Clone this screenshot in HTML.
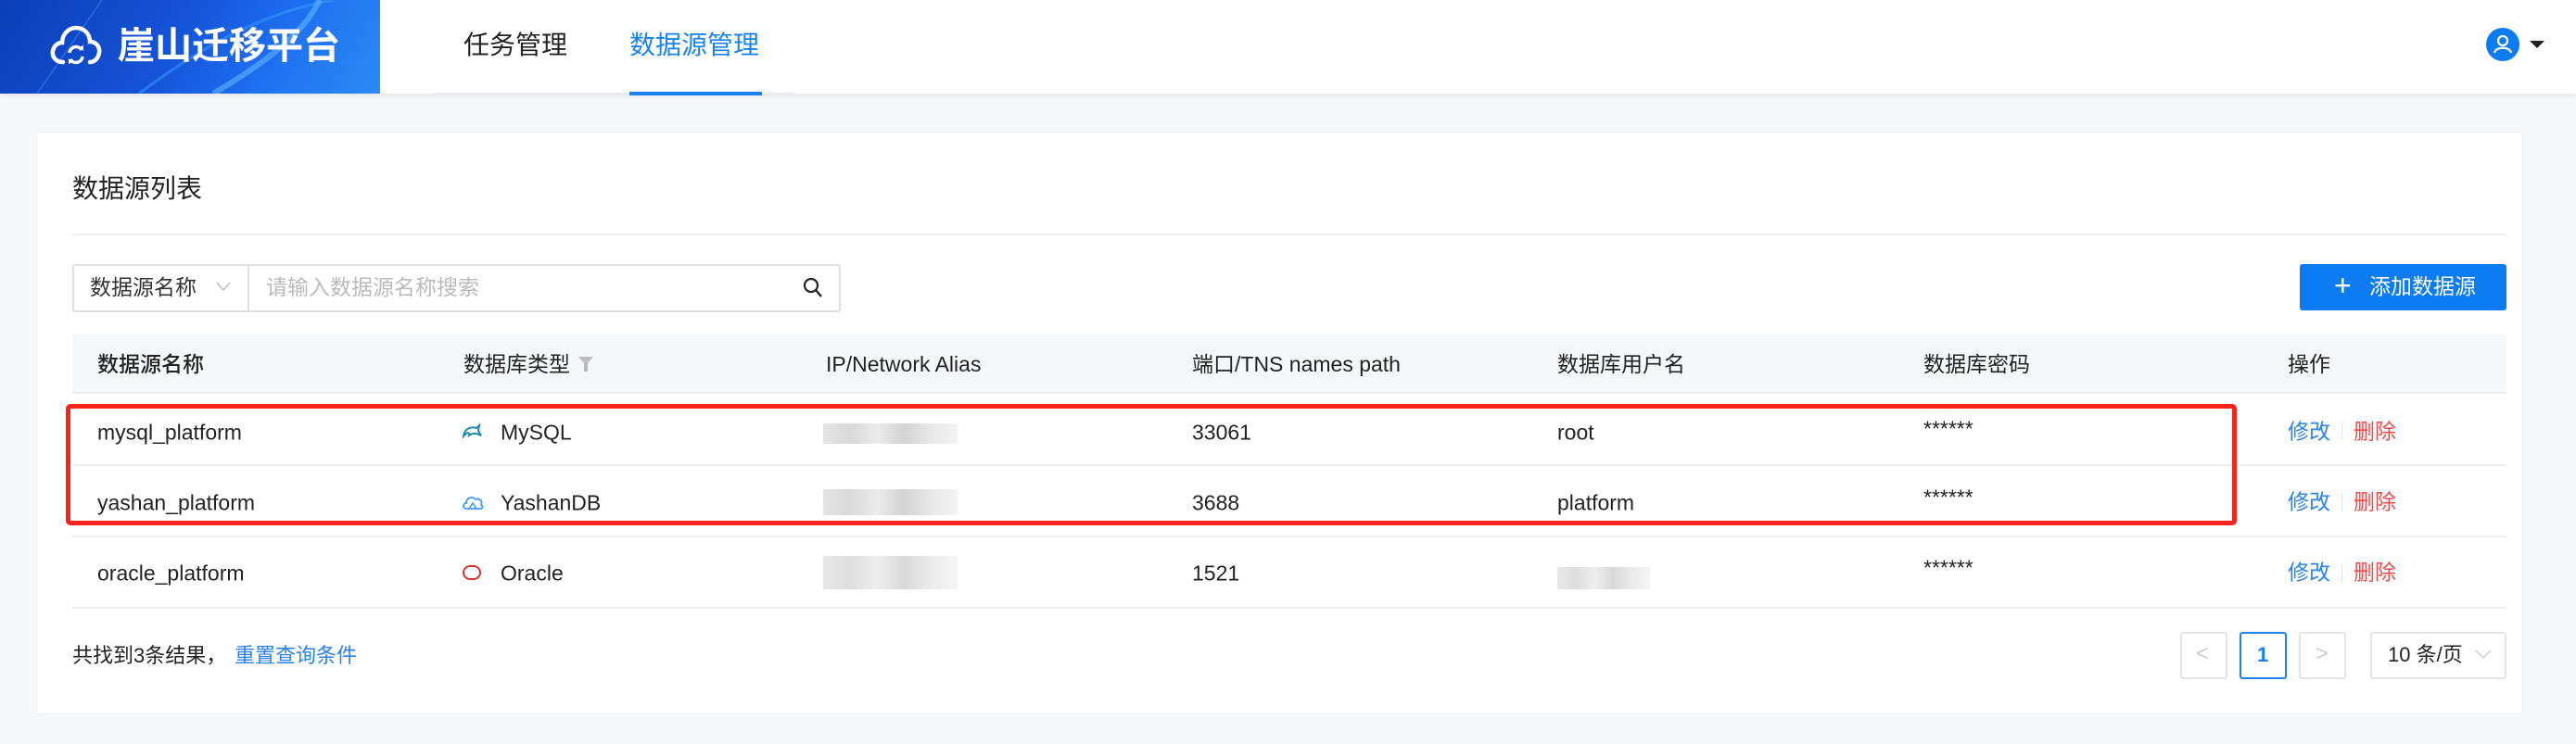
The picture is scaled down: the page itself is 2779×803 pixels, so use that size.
<!DOCTYPE html>
<html><head><meta charset="utf-8"><style>
*{margin:0;padding:0;box-sizing:border-box}
body{width:2779px;height:803px;background:#f5f7fa;font-family:"Liberation Sans","Noto Sans CJK SC",sans-serif;position:relative;overflow:hidden;color:#222}
.abs{position:absolute}
.hdr{left:0;top:0;width:2779px;height:101px;background:#fff;box-shadow:0 2px 6px rgba(0,0,0,.08)}
.logo{left:0;top:0;width:410px;height:101px;background:linear-gradient(120deg,#0a3fb8 0%,#1553d8 45%,#1e6ff0 70%,#2b8bf5 100%);overflow:hidden}
.t{white-space:nowrap;line-height:1}
.card{left:39px;top:142px;width:2683px;height:629px;background:#fff;border:1px solid #eceef2;border-radius:3px}
.row{left:78px;width:2626px;border-bottom:2px solid #ececec}
.cell{font-size:23px;color:#222;transform:translateY(-50%)}
.blur{background:linear-gradient(90deg,#ddd,#cfcfcf 20%,#e6e6e6 40%,#c8c8c8 60%,#e2e2e2 80%,#f0f0f0)}
</style></head><body>
<div class="abs hdr"></div>
<div class="abs logo">
<svg class="abs" style="left:0;top:0" width="410" height="101"><path d="M150 101 C230 40 300 10 360 0" stroke="#3aa0ff" stroke-width="3" fill="none" opacity=".5"/><path d="M40 101 L110 0" stroke="#5aa0ff" stroke-width="1.5" opacity=".4"/><path d="M230 101 C300 60 330 30 345 0" stroke="#6ec3ff" stroke-width="6" fill="none" opacity=".5"/></svg>
<svg class="abs" style="left:54px;top:27px" width="56" height="44" viewBox="0 0 56 44"><path d="M14 40 C5 40 2 33 3 28 C4 22 9 19 13 19 C13 10 20 3 28 3 C37 3 43 10 43 18 C50 18 54 24 53 30 C52 36 48 40 43 40" fill="none" stroke="#fff" stroke-width="4.5" stroke-linecap="round"/><path d="M21 30 A7 7 0 0 1 34 27" fill="none" stroke="#fff" stroke-width="3.5"/><path d="M35 34 A7 7 0 0 1 22 37" fill="none" stroke="#fff" stroke-width="3.5"/><path d="M31 24 L36 28 L36 22Z" fill="#fff"/><path d="M25 40 L20 36 L20 42Z" fill="#fff"/></svg>
<div class="abs t" style="left:127px;top:30px;font-size:40px;font-weight:bold;color:#fff">崖山迁移平台</div>
</div>
<div class="abs t" style="left:500px;top:35px;font-size:28px;color:#222">任务管理</div>
<div class="abs t" style="left:679px;top:35px;font-size:28px;color:#1a82f0">数据源管理</div>
<div class="abs" style="left:468px;top:100px;width:387px;height:1px;background:#e6e8eb"></div>
<div class="abs" style="left:679px;top:99px;width:143px;height:4px;background:#1a82f0"></div>
<div class="abs" style="left:2682px;top:30px;width:36px;height:36px;border-radius:50%;background:#0d7bf2"></div>
<svg class="abs" style="left:2682px;top:30px" width="36" height="36"><circle cx="18" cy="14" r="5" fill="none" stroke="#fff" stroke-width="2.2"/><path d="M9 27 C10 20 26 20 27 27" fill="none" stroke="#fff" stroke-width="2.2"/></svg>
<div class="abs" style="left:2729px;top:44px;border-left:8px solid transparent;border-right:8px solid transparent;border-top:8px solid #222"></div>

<div class="abs card"></div>
<div class="abs t" style="left:78px;top:190px;font-size:28px;color:#222">数据源列表</div>
<div class="abs" style="left:78px;top:252px;width:2626px;height:2px;background:#eceef2"></div>

<div class="abs" style="left:78px;top:285px;width:829px;height:52px;border:2px solid #dcdfe6;border-radius:3px;background:#fff"></div>
<div class="abs" style="left:267px;top:287px;width:2px;height:48px;background:#dcdfe6"></div>
<div class="abs t" style="left:97px;top:299px;font-size:23px;color:#333">数据源名称</div>
<svg class="abs" style="left:233px;top:303px" width="16" height="12"><path d="M1 2 L8 10 L15 2" fill="none" stroke="#bbb" stroke-width="1.5"/></svg>
<div class="abs t" style="left:287px;top:299px;font-size:23px;color:#bbb">请输入数据源名称搜索</div>
<svg class="abs" style="left:866px;top:299px" width="22" height="24"><circle cx="9" cy="9" r="7" fill="none" stroke="#222" stroke-width="2.2"/><path d="M14 14 L20 21" stroke="#222" stroke-width="2.4"/></svg>

<div class="abs" style="left:2481px;top:285px;width:223px;height:50px;background:#0d7bf2;border-radius:3px"></div>
<div class="abs t" style="left:2518px;top:292px;font-size:32px;color:#fff;font-weight:300">+</div>
<div class="abs t" style="left:2556px;top:298px;font-size:23px;color:#fff">添加数据源</div>

<div class="abs" style="left:78px;top:361px;width:2626px;height:64px;background:#f5f7fa;border-bottom:2px solid #ececec"></div>
<div class="abs t" style="left:105px;top:382px;font-size:23px;color:#222;font-weight:500">数据源名称</div>
<div class="abs t" style="left:500px;top:382px;font-size:23px;color:#222">数据库类型</div>
<svg class="abs" style="left:623px;top:384px" width="18" height="18"><path d="M1 1 H17 L11 8 V17 H7 V8Z" fill="#bbb"/></svg>
<div class="abs t" style="left:891px;top:382px;font-size:23px;color:#222">IP/Network Alias</div>
<div class="abs t" style="left:1286px;top:382px;font-size:23px;color:#222">端口/TNS names path</div>
<div class="abs t" style="left:1680px;top:382px;font-size:23px;color:#222">数据库用户名</div>
<div class="abs t" style="left:2075px;top:382px;font-size:23px;color:#222">数据库密码</div>
<div class="abs t" style="left:2468px;top:382px;font-size:23px;color:#222">操作</div>

<div class="abs row" style="top:425px;height:78px"></div>
<div class="abs row" style="top:503px;height:77px"></div>
<div class="abs row" style="top:580px;height:77px"></div>

<div class="abs t cell" style="left:105px;top:467px">mysql_platform</div>
<div class="abs t cell" style="left:105px;top:543px">yashan_platform</div>
<div class="abs t cell" style="left:105px;top:619px">oracle_platform</div>
<svg class="abs" style="left:498px;top:457px" width="22" height="16"><path d="M2 14 C3 6 9 3 16 5 L19 2 L18 8 L21 13 C16 10 12 10 8 13 C9 9 6 9 2 14Z" fill="none" stroke="#1b8cb0" stroke-width="2"/></svg>
<svg class="abs" style="left:498px;top:533px" width="24" height="18"><path d="M5 16 C1 16 1 10 5 10 C5 4 12 2 15 6 C19 4 23 8 21 12 C24 14 22 16 20 16Z" fill="none" stroke="#3d9cf0" stroke-width="1.8"/><path d="M8 16 L12 10 L16 16" fill="none" stroke="#3d9cf0" stroke-width="1.5"/></svg>
<div class="abs" style="left:499px;top:610px;width:20px;height:16px;border:2.5px solid #d7322e;border-radius:8px"></div>
<div class="abs t cell" style="left:540px;top:467px">MySQL</div>
<div class="abs t cell" style="left:540px;top:543px">YashanDB</div>
<div class="abs t cell" style="left:540px;top:619px">Oracle</div>

<div class="abs blur" style="left:888px;top:457px;width:145px;height:22px;opacity:.8"></div>
<div class="abs blur" style="left:888px;top:528px;width:145px;height:28px;opacity:.8"></div>
<div class="abs blur" style="left:888px;top:600px;width:145px;height:36px;opacity:.7"></div>
<div class="abs blur" style="left:1680px;top:612px;width:100px;height:24px;opacity:.7"></div>

<div class="abs t cell" style="left:1286px;top:467px">33061</div>
<div class="abs t cell" style="left:1286px;top:543px">3688</div>
<div class="abs t cell" style="left:1286px;top:619px">1521</div>
<div class="abs t cell" style="left:1680px;top:467px">root</div>
<div class="abs t cell" style="left:1680px;top:543px">platform</div>
<div class="abs t cell" style="left:2075px;top:463px">******</div>
<div class="abs t cell" style="left:2075px;top:537px">******</div>
<div class="abs t cell" style="left:2075px;top:613px">******</div>

<div class="abs t cell" style="left:2468px;top:466px;color:#2a82f0">修改</div>
<div class="abs t cell" style="left:2539px;top:466px;color:#f04a4a">删除</div>
<div class="abs t cell" style="left:2468px;top:542px;color:#2a82f0">修改</div>
<div class="abs t cell" style="left:2539px;top:542px;color:#f04a4a">删除</div>
<div class="abs t cell" style="left:2468px;top:618px;color:#2a82f0">修改</div>
<div class="abs t cell" style="left:2539px;top:618px;color:#f04a4a">删除</div>
<div class="abs" style="left:2526px;top:455px;width:1px;height:20px;background:#e4e4e4"></div>
<div class="abs" style="left:2526px;top:532px;width:1px;height:20px;background:#e4e4e4"></div>
<div class="abs" style="left:2526px;top:608px;width:1px;height:20px;background:#e4e4e4"></div>

<div class="abs" style="left:71px;top:436px;width:2342px;height:131px;border:5px solid #f5231c;border-radius:5px"></div>

<div class="abs t" style="left:78px;top:697px;font-size:22px;color:#222">共找到3条结果，</div>
<div class="abs t" style="left:253px;top:697px;font-size:22px;color:#2a82f0">重置查询条件</div>

<div class="abs" style="left:2352px;top:682px;width:51px;height:51px;border:2px solid #e2e4e8;border-radius:3px"></div>
<div class="abs t" style="left:2369px;top:694px;font-size:24px;color:#ccc">&lt;</div>
<div class="abs" style="left:2416px;top:682px;width:51px;height:51px;border:2px solid #1a82f0;border-radius:3px"></div>
<div class="abs t" style="left:2435px;top:696px;font-size:22px;color:#1a82f0;font-weight:bold">1</div>
<div class="abs" style="left:2480px;top:682px;width:51px;height:51px;border:2px solid #e2e4e8;border-radius:3px"></div>
<div class="abs t" style="left:2498px;top:694px;font-size:24px;color:#ccc">&gt;</div>
<div class="abs" style="left:2557px;top:682px;width:147px;height:51px;border:2px solid #e2e4e8;border-radius:3px"></div>
<div class="abs t" style="left:2576px;top:696px;font-size:22px;color:#222">10 条/页</div>
<svg class="abs" style="left:2670px;top:700px" width="18" height="12"><path d="M1 2 L9 10 L17 2" fill="none" stroke="#ccc" stroke-width="1.5"/></svg>
</body></html>
